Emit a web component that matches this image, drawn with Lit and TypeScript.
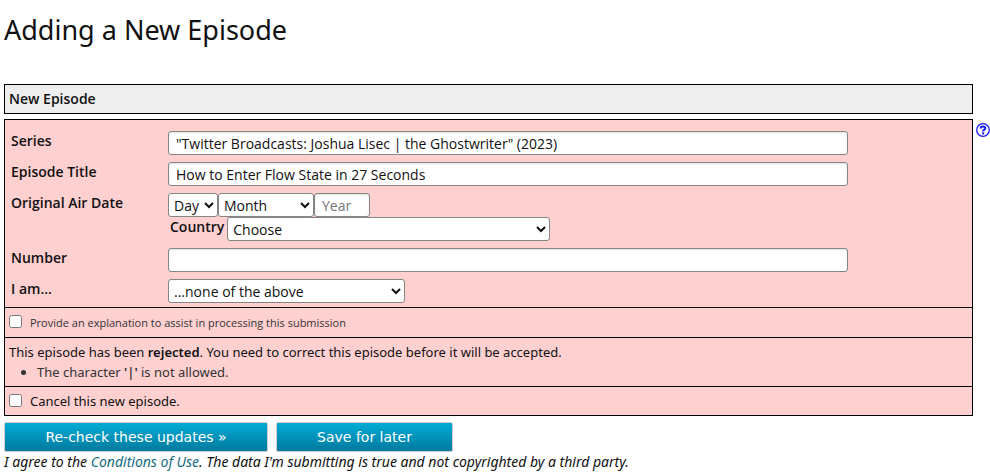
import { LitElement, html, css } from "lit";
import { customElement } from "lit/decorators.js";

@customElement("app-root")
export class AppRoot extends LitElement {
  static styles = css`
    :host {
      display: block;
      padding: 12px 0 4px 4px;
      background: #fff;
      color: #111;
      font-family: "Open Sans", "Noto Sans", sans-serif;
      font-size: 14px;
      line-height: 20px;
    }
    * {
      box-sizing: border-box;
    }
    h1 {
      margin: 0 0 36px;
      font-family: "Noto Sans", sans-serif;
      font-size: 27px;
      line-height: 36px;
      font-weight: 400;
    }
    .layout {
      display: grid;
      grid-template-columns: minmax(0, 1fr) 14px;
      column-gap: 3px;
      row-gap: 5px;
    }
    .heading {
      grid-column: 1;
      margin: 0;
      padding: 4px;
      border: 1px solid #000;
      background: #eee;
      font-size: 14px;
      line-height: 20px;
      font-weight: 600;
    }
    .panel {
      grid-column: 1;
      border: 1px solid #000;
      background: #ffd0d0;
    }
    .help {
      display: block;
      height: 14px;
      margin-top: 4px;
    }
    .help svg {
      display: block;
    }
    .fields {
      display: grid;
      gap: 7px;
      padding: 11px 4px 4px 6px;
    }
    .row {
      display: grid;
      grid-template-columns: 157px minmax(0, 680px);
    }
    .label {
      font-weight: 600;
    }
    .date {
      display: flex;
      flex-wrap: wrap;
    }
    .country {
      display: flex;
      flex-basis: 100%;
      gap: 3px;
      padding-left: 2px;
    }
    input[type="text"],
    select {
      height: 24px;
      margin: 0;
      border: 1px solid #858585;
      border-radius: 3px;
      background-color: #fff;
      color: #111;
      font: inherit;
    }
    input[type="text"] {
      width: 100%;
      padding: 0 7px;
      box-shadow: 0 1px 2px rgba(0, 0, 0, 0.12) inset;
    }
    input::placeholder {
      color: #757575;
      opacity: 1;
    }
    select {
      padding: 0 1px;
    }
    .day {
      width: 50px;
    }
    .month {
      width: 96px;
    }
    input[type="text"].year {
      width: 56px;
    }
    .place {
      width: 323px;
    }
    .role {
      width: 237px;
    }
    .section {
      padding: 4px;
      border-top: 1px solid #000;
    }
    .check {
      display: flex;
      align-items: center;
    }
    .check input {
      width: 13px;
      height: 13px;
      margin: 0 8px 2px 0;
    }
    .explain {
      min-height: 30px;
      color: #333;
      font-size: 11px;
    }
    .message {
      margin: 0;
    }
    .errors {
      margin: 0;
      padding-left: 28px;
      color: #333;
    }
    b {
      font-weight: 600;
    }
    .message,
    .errors,
    .confirm {
      font-family: "Noto Sans", sans-serif;
      font-size: 13px;
    }
    .actions {
      display: flex;
      gap: 8px;
      margin-top: 6px;
    }
    button {
      height: 30px;
      padding: 0;
      border: 1px solid #ccc;
      border-radius: 2px;
      background: linear-gradient(#04acd6, #007a9e);
      color: #fff;
      font: 14px/20px "DejaVu Sans", sans-serif;
    }
    .recheck {
      width: 264px;
    }
    .save {
      width: 177px;
    }
    .terms {
      margin: 0;
      font-family: "Noto Sans", sans-serif;
      font-style: italic;
    }
    a {
      color: #136c81;
      text-decoration: none;
    }
  `;

  render() {
    return html`
      <h1>Adding a New Episode</h1>
      <form @submit=${(e: Event) => e.preventDefault()}>
        <div class="layout">
          <h2 class="heading">New Episode</h2>
          <div class="panel">
            <div class="fields">
              <div class="row">
                <label class="label" for="series">Series</label>
                <input id="series" type="text" value='"Twitter Broadcasts: Joshua Lisec | the Ghostwriter" (2023)' />
              </div>
              <div class="row">
                <label class="label" for="title">Episode Title</label>
                <input id="title" type="text" value="How to Enter Flow State in 27 Seconds" />
              </div>
              <div class="row">
                <label class="label" for="day">Original Air Date</label>
                <div class="date">
                  <select id="day" class="day"><option>Day</option></select>
                  <select class="month" aria-label="Month"><option>Month</option></select>
                  <input class="year" type="text" placeholder="Year" aria-label="Year" />
                  <div class="country">
                    <label class="label" for="country">Country</label>
                    <select id="country" class="place"><option>Choose</option></select>
                  </div>
                </div>
              </div>
              <div class="row">
                <label class="label" for="number">Number</label>
                <input id="number" type="text" />
              </div>
              <div class="row">
                <label class="label" for="role">I am...</label>
                <select id="role" class="role"><option>...none of the above</option></select>
              </div>
            </div>
            <label class="section check explain">
              <input type="checkbox" />
              Provide an explanation to assist in processing this submission
            </label>
            <div class="section">
              <p class="message">
                This episode has been <b>rejected</b>. You need to correct this episode before it will be accepted.
              </p>
              <ul class="errors">
                <li>The character <b>'|'</b> is not allowed.</li>
              </ul>
            </div>
            <label class="section check confirm">
              <input type="checkbox" />
              Cancel this new episode.
            </label>
          </div>
          <a class="help" href="#help" aria-label="Help">
            <svg width="14" height="14" viewBox="0 0 14 14" fill="none" stroke="#1a1aff">
              <circle cx="7" cy="7" r="6.3" stroke-width="1.3" />
              <path d="M4.6 5.5C4.6 2.8 9.3 2.8 9.3 5.2C9.3 6.7 7.1 6.5 7.1 8.6" stroke-width="2.1" />
              <path d="M7.1 9.4V11.4" stroke-width="2.1" />
            </svg>
          </a>
        </div>
        <div class="actions">
          <button class="recheck" type="submit">Re-check these updates »</button>
          <button class="save" type="button">Save for later</button>
        </div>
        <p class="terms">
          I agree to the <a href="#conditions">Conditions of Use</a>. The data I'm submitting is true and not
          copyrighted by a third party.
        </p>
      </form>
    `;
  }
}
